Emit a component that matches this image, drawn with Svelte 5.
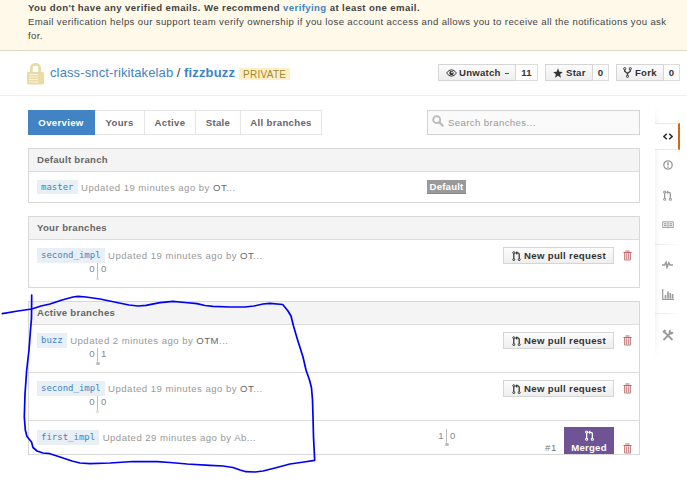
<script>
  const tabs = [
    { label: 'Overview', cls: 'overview' },
    { label: 'Yours', cls: 'yours' },
    { label: 'Active', cls: 'act' },
    { label: 'Stale', cls: 'stale' },
    { label: 'All branches', cls: 'all' }
  ];
  const sections = [
    { title: 'Default branch', rows: [{ name: 'master', age: '19', who: 'OT', kind: 'default' }] },
    { title: 'Your branches', rows: [{ name: 'second_impl', age: '19', who: 'OT', kind: 'open', behind: 0, ahead: 0 }] },
    {
      title: 'Active branches',
      rows: [
        { name: 'buzz', age: '2', who: 'OTM', kind: 'open', behind: 0, ahead: 1 },
        { name: 'second_impl', age: '19', who: 'OT', kind: 'open', behind: 0, ahead: 0 },
        { name: 'first_impl', age: '29', who: '', dim: 'Ab', kind: 'merged', behind: 1, ahead: 0 }
      ]
    }
  ];
</script>

{#snippet pullIcon(w, h)}
  <svg width={w} height={h} viewBox="0 0 12 14">
    <g fill="none" stroke="currentColor" stroke-width="1.4">
      <circle cx="2.2" cy="2.4" r="1.4" /><circle cx="2.2" cy="12" r="1.4" /><circle cx="9.8" cy="12" r="1.4" />
      <path d="M2.2 4v6.5M9.8 10.5V5q0-2.300-2-2.300H6" stroke-width="1.700" />
    </g>
    <path d="M7 0v5.500L4 2.700z" fill="currentColor" />
  </svg>
{/snippet}

{#snippet trash()}
  <svg class="trash" width="9" height="11" viewBox="0 0 9 11">
    <path d="M.5 2.500h8M2.500 1h4" fill="none" stroke="#c2606a" stroke-width="1" />
    <path d="M1.500 3v7h6V3" fill="#f3dcc8" stroke="#cc857c" />
    <path d="M3.500 3.500v6M5.500 3.500v6" stroke="#c98a94" stroke-width=".9" />
  </svg>
{/snippet}

{#snippet divergence(row)}
  <div class="div"><span class="behind">{row.behind}</span><i class:some={row.ahead > 0 || row.behind > 0}></i><span class="ahead">{row.ahead}</span></div>
{/snippet}

<div class="page">
  <div class="flash">
    <b>You don't have any verified emails. We recommend <a>verifying</a> at least one email.</b>
    <p>Email verification helps our support team verify ownership if you lose account access and allows you to receive all the notifications you ask<br />for.</p>
  </div>

  <header>
    <svg class="lock" width="17" height="22" viewBox="0 0 17 22">
      <path d="M4.3 10V5.5a4.2 4.2 0 0 1 8.4 0V10" fill="none" stroke="#e9dba5" stroke-width="2.8" />
      <path d="M1.5 9h14q1.5 0 1.5 1.5V20q0 1.500-1.500 1.500h-14Q0 21.500 0 20v-9.500Q0 9 1.500 9z" fill="#e9dba5" />
      <path d="M2 11.500h9M2 14h9M2 16.500h9M2 19h9" stroke="#fbf6e2" stroke-width="1.1" />
    </svg>
    <h1><a>class-snct-rikitakelab</a><span class="slash">/</span><a class="repo">fizzbuzz</a></h1>
    <span class="private">PRIVATE</span>
    <div class="social">
      <div class="pair">
        <span class="btn watch">
          <svg width="11" height="8" viewBox="0 0 11 8"><path d="M.5 4Q5.500-2.500 10.500 4 5.500 10.500.5 4z" fill="none" stroke="#333" /><circle cx="5.500" cy="4" r="2.200" fill="#333" /><circle cx="6" cy="3.300" r=".9" fill="#eee" /></svg>
          <span>Unwatch</span><i class="caret"></i>
        </span><span class="count c1">11</span>
      </div>
      <div class="pair">
        <span class="btn star">
          <svg width="10" height="10" viewBox="0 0 10 10"><path d="M5 .3 6.300 3.700 9.900 3.900 7.100 6.200 8 9.700 5 7.700 2 9.700 2.900 6.200.1 3.900 3.700 3.700z" fill="#333" /></svg>
          <span>Star</span>
        </span><span class="count">0</span>
      </div>
      <div class="pair">
        <span class="btn fork">
          <svg width="9" height="11" viewBox="0 0 9 11"><g fill="none" stroke="#333"><circle cx="1.700" cy="1.700" r="1.100" /><circle cx="7.300" cy="1.700" r="1.100" /><circle cx="4.500" cy="9.300" r="1.100" /><path d="M1.700 3v1.200L4.500 6.500 7.300 4.200V3M4.500 6.200v2" stroke-width="1.300" /></g></svg>
          <span>Fork</span>
        </span><span class="count">0</span>
      </div>
    </div>
  </header>

  <div class="body">
    <main>
      <div class="tools">
        <nav>
          {#each tabs as t}<span class={t.cls}>{t.label}</span>{/each}
        </nav>
        <div class="search">
          <svg width="12" height="12" viewBox="0 0 12 12"><circle cx="4.700" cy="4.700" r="3.500" fill="none" stroke="#bbb" stroke-width="1.800" /><path d="m7.300 7.300 3.300 3.300" stroke="#bbb" stroke-width="2.200" stroke-linecap="round" /></svg>
          <span>Search branches...</span>
        </div>
      </div>

      {#each sections as s}
        <section>
          <h2>{s.title}</h2>
          {#each s.rows as row}
            <div class="row {row.kind}">
              <div class="name">
                <div class="line">
                  <code>{row.name}</code><span class="upd">Updated {row.age} minutes ago by <em>{row.who}</em>{row.dim ?? ''}...</span>
                </div>
                {#if row.kind === 'open'}{@render divergence(row)}{/if}
              </div>
              {#if row.kind === 'default'}
                <span class="tag">Default</span>
              {:else if row.kind === 'open'}
                <span class="btn pr">{@render pullIcon(9, 10)}<span>New pull request</span></span>
                {@render trash()}
              {:else}
                {@render divergence(row)}
                <span class="num">#1</span>
                <span class="state">{@render pullIcon(9, 11)}<span>Merged</span></span>
                {@render trash()}
              {/if}
            </div>
          {/each}
        </section>
      {/each}
    </main>

    <aside>
      <div class="item current"><svg width="10" height="7" viewBox="0 0 10 7"><path d="M3.800.7 1 3.500l2.800 2.800M6.200.7 9 3.500 6.200 6.300" fill="none" stroke="#333" stroke-width="1.600" /></svg></div>
      <div class="item i2"><svg width="10" height="10" viewBox="0 0 10 10"><circle cx="5" cy="5" r="4.200" fill="none" stroke="#999" stroke-width="1.300" /><path d="M5 2.300v3.200M5 6.500v1.300" stroke="#999" stroke-width="1.500" /></svg></div>
      <div class="item i3">{@render pullIcon(9, 11)}</div>
      <div class="item i4"><svg width="12" height="8" viewBox="0 0 12 8"><path d="M.6.7h4.700q.7 0 .7.600 0-.6.700-.6h4.700v5.800H.6zM6 1v6.500" fill="#eee" stroke="#aaa" /><path d="M2 2.800h2.500M2 4.600h2.500M7.500 2.800H10M7.500 4.600H10" stroke="#999" /></svg></div>
      <hr />
      <div class="item i5"><svg width="11" height="9" viewBox="0 0 11 9"><path d="M0 5h2.500L4 2.300l1 5L6.800 2.800 8 5h3" fill="none" stroke="#999" stroke-width="1.500" /></svg></div>
      <div class="item i6"><svg width="12" height="11" viewBox="0 0 12 11"><path d="M.7 0v10.300H12" fill="none" stroke="#999" stroke-width="1.200" /><path d="M3.500 9.500V6M6 9.500V2.500M8.300 9.500V4M10.600 9.500V5" stroke="#999" stroke-width="1.600" /></svg></div>
      <hr />
      <div class="item i7"><svg width="12" height="12" viewBox="0 0 12 12"><path d="M2 2.500 10.500 11M1.500 11 8 4.500" stroke="#999" stroke-width="1.800" /><path d="M11.500 3.300A2.500 2.500 0 1 1 8.800.6L8.600 2.800zM.3 2.600 2.600.4l1.800 1.200L2 4.300z" fill="#999" /></svg></div>
    </aside>
  </div>

  <svg class="ink" width="687" height="489" viewBox="0 0 687 489">
    <path d="M2.300 313.700 18 311 31.700 309 41 306 50 304 62 300 73 297 78 296.300 86 297 100 299 112 301.500 129 305 138 306 146 305.300 160 302.700 173 301.300 185 302.500 197 303.700 205 305.500 213 306.300 230 307 245 307 254 306 263 304 270 303.300 282.700 304.500 288 311 291 316 293.500 326 297 338 303 357 306 370 309.500 380 311.500 388 312.500 400 313 417 313.500 437 314.700 460.300 304 462 290 464 275 468 263 471 255 472 246 471.700 240 470 233 467.500 223 466 210 465.300 187 464 170 462.500 157 461.700 133 461.500 110 463 90 463.700 80 463 72 461 60 457 50 453.700 43 453 37 451 33 447.500 31.500 442 27 436.500 25.300 430 24.300 417 25 394 26.700 370 29 350 30.500 330 31.500 318 31.700 295" />
  </svg>
</div>

<style>
  :global(body) { margin: 0; background: #fff; overflow: hidden; }
  .page { position: relative; width: 687px; height: 489px; overflow: hidden; font: 9.6px/14px 'Liberation Sans', Arial, sans-serif; color: #444; box-sizing: border-box; }
  .page :global(*) { box-sizing: border-box; }
  svg { display: block; flex: none; }
  a { color: #4183c4; }
  i { font-style: normal; }
  .flash { height: 51px; padding: 1px 0 0 28px; background: #fff9ea; border-bottom: 1px solid #dfd8c2; white-space: nowrap; }
  .flash b { display: block; letter-spacing: .4px; }
  .flash p { margin: 0; letter-spacing: .36px; }
  header { display: flex; align-items: flex-start; height: 45px; border-bottom: 1px solid #eee; padding-left: 27px; white-space: nowrap; }
  .lock { margin-top: 12px; }
  h1 { display: flex; margin: 13px 0 0 6px; font-size: 13px; line-height: 18px; font-weight: 400; letter-spacing: .12px; }
  .slash { margin: 0 3.500px; }
  .repo { font-weight: 700; letter-spacing: .16px; }
  .private { margin: 17px 0 0 4px; height: 12px; width: 51px; text-align: center; background: #ffefc6; color: #a1882b; font-size: 10px; line-height: 13px; letter-spacing: .25px; }
  .social { display: flex; gap: 7px; margin: 13px 7px 0 auto; }
  .pair { display: flex; height: 17px; font-weight: 700; color: #333; letter-spacing: .25px; }
  .btn { display: flex; align-items: center; height: 17px; border: 1px solid #d5d5d5; background: linear-gradient(#fcfcfc, #eee); color: #333; font-weight: 700; line-height: 15px; }
  .watch { width: 78px; padding-left: 7px; gap: 2px; }
  .star { width: 48px; padding-left: 7px; gap: 3px; }
  .fork { width: 48px; padding-left: 6px; gap: 3px; }
  .caret { width: 4px; height: 1.500px; background: #555; margin-left: 2px; margin-top: 2px; }
  .count { width: 16px; border: 1px solid #ddd; border-left: 0; text-align: center; line-height: 15px; }
  .c1 { width: 22px; }
  .body { display: flex; }
  main { width: 612px; margin: 14px 0 0 28px; }
  .tools { display: flex; justify-content: space-between; height: 25px; }
  nav { display: flex; font-weight: 700; color: #666; line-height: 24px; text-align: center; letter-spacing: .33px; white-space: nowrap; }
  nav span { border: 1px solid #e5e5e5; border-left: 0; }
  .overview { width: 67px; background: #4183c4; border-color: #4183c4; color: #fff; }
  .yours { width: 50px; }
  .act { width: 51px; }
  .stale { width: 45px; }
  .all { width: 81px; }
  .search { display: flex; width: 213px; border: 1px solid #d3d3d3; background: #fafafa; color: #999; padding: 4px 0 0 4px; gap: 4px; letter-spacing: .4px; }
  .search span { line-height: 15px; }
  section { margin-top: 13px; border: 1px solid #d8d8d8; }
  h2 { margin: 0; height: 22px; padding-left: 8px; background: #f4f4f4; font-size: 9.6px; line-height: 22px; color: #666; letter-spacing: .27px; }
  .row { display: flex; border-top: 1px solid #ddd; padding-left: 8px; }
  .default { height: 31px; }
  .open { height: 48px; }
  .merged { height: 34px; overflow: hidden; }
  .name { width: 390px; padding-top: 8px; }
  .open .name { width: 466px; }
  .merged .name { padding-top: 9px; }
  .line { display: flex; white-space: nowrap; }
  code { height: 15px; padding: 0 4px; background: #e8f0f6; color: #4183c4; font: 9px/14px 'DejaVu Sans Mono', monospace; }
  .default code { height: 14px; }
  .merged code { line-height: 15px; }
  .upd { margin-left: 3.500px; color: #999; letter-spacing: .46px; line-height: 15px; }
  em { font-style: normal; color: #666; }
  .div { display: flex; width: 31px; margin-left: 45px; color: #888; line-height: 12px; }
  .div .behind { width: 15px; text-align: right; padding-right: 2.500px; }
  .div i { width: 1px; height: 17px; background: #bbb; position: relative; }
  .div i::after { content: ''; position: absolute; left: -1px; top: 14px; width: 3px; height: 3px; border-radius: 2px; background: #ddd; }
  .div i.some::after { left: -1px; width: 4px; background: #bbb; }
  .div .ahead { padding-left: 3px; }
  .merged .div { margin: 8px 0 0 4px; }
  .merged .div span { line-height: 14px; }
  .tag { margin-top: 8px; width: 39px; height: 14px; background: #999; border-bottom: 1px solid #888; color: #fff; font-weight: 700; text-align: center; line-height: 14px; letter-spacing: .2px; }
  .pr { width: 111px; margin-top: 7px; padding-left: 8px; gap: 3px; letter-spacing: .33px; white-space: nowrap; }
  .trash { margin: 10px 0 0 9px; }
  .num { margin: 20px 0 0 83px; width: 19px; color: #777; letter-spacing: .7px; }
  .state { width: 50px; height: 28px; margin-top: 6px; background: #6e5494; color: #fff; font-weight: 700; display: flex; flex-direction: column; align-items: center; padding-top: 3px; line-height: 14px; letter-spacing: .25px; }
  .merged .trash { margin-top: 22px; }
  aside { width: 25px; height: 251px; margin: 11px 0 0 15px; padding-top: 16px; background: linear-gradient(90deg, #f5f5f5, #fff 5px); mask-image: linear-gradient(transparent, #000 12px, #000 236px, transparent); color: #999; }
  .item { display: flex; align-items: center; justify-content: center; height: 30px; }
  .current { height: 27px; background: #fff; border: 1px solid #e8e8e8; border-left: 0; border-right: 2px solid #d26911; }
  .current svg { margin-left: 2px; }
  aside hr { margin: 4px 0; height: 1px; border: 0; background: linear-gradient(90deg, #e5e5e5, #fff); }
  .i7 { height: 33px; }
  .ink { position: absolute; left: 0; top: 0; pointer-events: none; }
  .ink path { fill: none; stroke: #0000f5; stroke-width: 1.700; stroke-linejoin: round; stroke-linecap: round; }
</style>
